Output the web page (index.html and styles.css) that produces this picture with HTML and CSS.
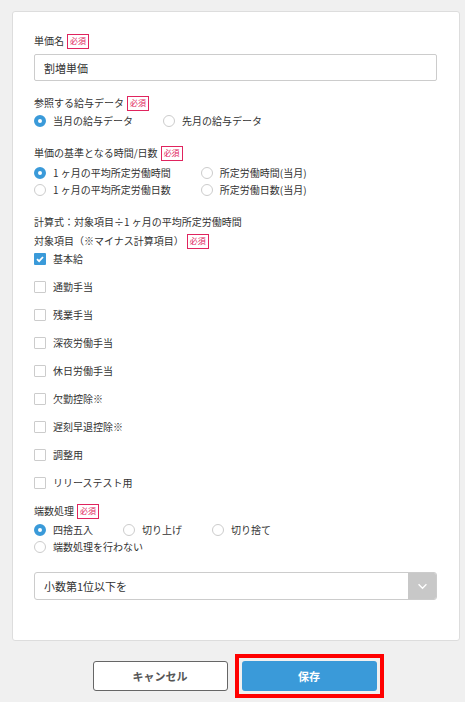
FILE: index.html
```html
<!DOCTYPE html>
<html lang="ja">
<head>
    <meta charset="UTF-8">
    <meta name="viewport" content="width=device-width, initial-scale=1.0">
    <title>単価設定</title>
    <link rel="stylesheet" href="styles.css">
</head>
<body>
<div class="card">
    <div class="field-label">単価名 <span class="badge">必須</span></div>
    <div class="text-input">割増単価</div>

    <div class="field-label mt-15">参照する給与データ <span class="badge">必須</span></div>
    <div class="radio-row mt-4">
        <label class="radio-item"><span class="radio checked"></span>当月の給与データ</label>
        <label class="radio-item"><span class="radio"></span>先月の給与データ</label>
    </div>

    <div class="field-label mt-18">単価の基準となる時間/日数 <span class="badge">必須</span></div>
    <div class="radio-row mt-6">
        <label class="radio-item"><span class="radio checked"></span>1 ヶ月の平均所定労働時間</label>
        <label class="radio-item"><span class="radio"></span>所定労働時間(当月)</label>
    </div>
    <div class="radio-row mt-3">
        <label class="radio-item"><span class="radio"></span>1 ヶ月の平均所定労働日数</label>
        <label class="radio-item"><span class="radio"></span>所定労働日数(当月)</label>
    </div>

    <div class="note mt-18">計算式：対象項目÷1 ヶ月の平均所定労働時間</div>
    <div class="field-label mt-5">対象項目（※マイナス計算項目） <span class="badge">必須</span></div>
    <div class="check-list">
        <label class="check-item"><span class="checkbox checked">
            <svg viewBox="0 0 12 12" width="12" height="12"><path d="M3 6.2 L5.1 8.2 L9 4" fill="none" stroke="#fff" stroke-width="1.8"/></svg>
        </span>基本給</label>
        <label class="check-item"><span class="checkbox"></span>通勤手当</label>
        <label class="check-item"><span class="checkbox"></span>残業手当</label>
        <label class="check-item"><span class="checkbox"></span>深夜労働手当</label>
        <label class="check-item"><span class="checkbox"></span>休日労働手当</label>
        <label class="check-item"><span class="checkbox"></span>欠勤控除※</label>
        <label class="check-item"><span class="checkbox"></span>遅刻早退控除※</label>
        <label class="check-item"><span class="checkbox"></span>調整用</label>
        <label class="check-item"><span class="checkbox"></span>リリーステスト用</label>
    </div>

    <div class="field-label mt-14">端数処理 <span class="badge">必須</span></div>
    <div class="radio-row mt-5">
        <label class="radio-item"><span class="radio checked"></span>四捨五入</label>
        <label class="radio-item"><span class="radio"></span>切り上げ</label>
        <label class="radio-item"><span class="radio"></span>切り捨て</label>
    </div>
    <div class="radio-row mt-3">
        <label class="radio-item"><span class="radio"></span>端数処理を行わない</label>
    </div>

    <div class="select">
        <span class="select-text">小数第1位以下を</span>
        <span class="select-arrow">
            <svg viewBox="0 0 12 8" width="11" height="7"><path d="M1.5 1.5 L6 6 L10.5 1.5" fill="none" stroke="#fff" stroke-width="1.5"/></svg>
        </span>
    </div>
</div>

<div class="actions">
    <button class="btn btn-cancel">キャンセル</button>
    <div class="highlight">
        <button class="btn btn-save">保存</button>
    </div>
</div>
</body>
</html>
```

FILE: styles.css
```css
body {
    margin: 0;
    padding: 0;
    background-color: #f0f0f0;
    font-family: "Noto Sans CJK JP", "Noto Sans", sans-serif;
    color: #333;
    font-size: 10px;
}

.card {
    margin: 11px 5px 0 12px;
    background-color: #fff;
    border: 1px solid #ddd;
    border-radius: 3px;
    padding: 22px 22px 40px 21px;
    display: flex;
    flex-direction: column;
}

.field-label {
    display: flex;
    align-items: center;
    gap: 3px;
    height: 14px;
    line-height: 14px;
}

.badge {
    display: inline-flex;
    align-items: center;
    justify-content: center;
    box-sizing: border-box;
    height: 15px;
    padding: 0 2px;
    border: 1px solid #e0245e;
    color: #e0245e;
    font-size: 8px;
    line-height: 1;
}

.text-input {
    margin-top: 6px;
    height: 27px;
    box-sizing: border-box;
    border: 1px solid #ccc;
    border-radius: 2px;
    padding: 0 9px;
    display: flex;
    align-items: center;
    font-size: 11px;
}

.mt-3 { margin-top: 3px; }
.mt-4 { margin-top: 4px; }
.mt-5 { margin-top: 5px; }
.mt-6 { margin-top: 6px; }
.mt-14 { margin-top: 14px; }
.mt-15 { margin-top: 15px; }
.mt-18 { margin-top: 18px; }

.radio-row {
    display: flex;
    gap: 30px;
    height: 14px;
}

.radio-item, .check-item {
    display: flex;
    align-items: center;
    gap: 7px;
    line-height: 14px;
}

.radio {
    width: 12px;
    height: 12px;
    box-sizing: border-box;
    border-radius: 50%;
    border: 1px solid #ccc;
    background-color: #fff;
}

.radio.checked {
    border: 4px solid #3a9ad9;
}

.note {
    height: 14px;
    line-height: 14px;
}

.check-list {
    display: flex;
    flex-direction: column;
    gap: 14px;
    margin-top: 4px;
}

.check-item {
    height: 14px;
}

.checkbox {
    width: 12px;
    height: 12px;
    box-sizing: border-box;
    border: 1px solid #ccc;
    border-radius: 1px;
    background-color: #fff;
    display: flex;
}

.checkbox.checked {
    border: none;
    background-color: #3a9ad9;
}

.select {
    margin-top: 18px;
    height: 28px;
    box-sizing: border-box;
    border: 1px solid #ccc;
    border-radius: 3px;
    display: flex;
    align-items: stretch;
    font-size: 11px;
    overflow: hidden;
}

.select-text {
    flex: 1;
    display: flex;
    align-items: center;
    padding-left: 9px;
}

.select-arrow {
    width: 28px;
    background-color: #c8c8c8;
    display: flex;
    align-items: center;
    justify-content: center;
}

.actions {
    display: flex;
    justify-content: center;
    align-items: center;
    gap: 7px;
    margin-top: 13px;
    padding-left: 11px;
}

.btn {
    width: 135px;
    height: 30px;
    border-radius: 3px;
    font-family: inherit;
    font-size: 11px;
    font-weight: bold;
    cursor: pointer;
}

.btn-cancel {
    background-color: #fff;
    border: 1px solid #666;
    color: #555;
}

.highlight {
    border: 4px solid #f00;
    padding: 3px;
    display: flex;
}

.btn-save {
    background-color: #3a9ad9;
    border: none;
    color: #fff;
}
```
